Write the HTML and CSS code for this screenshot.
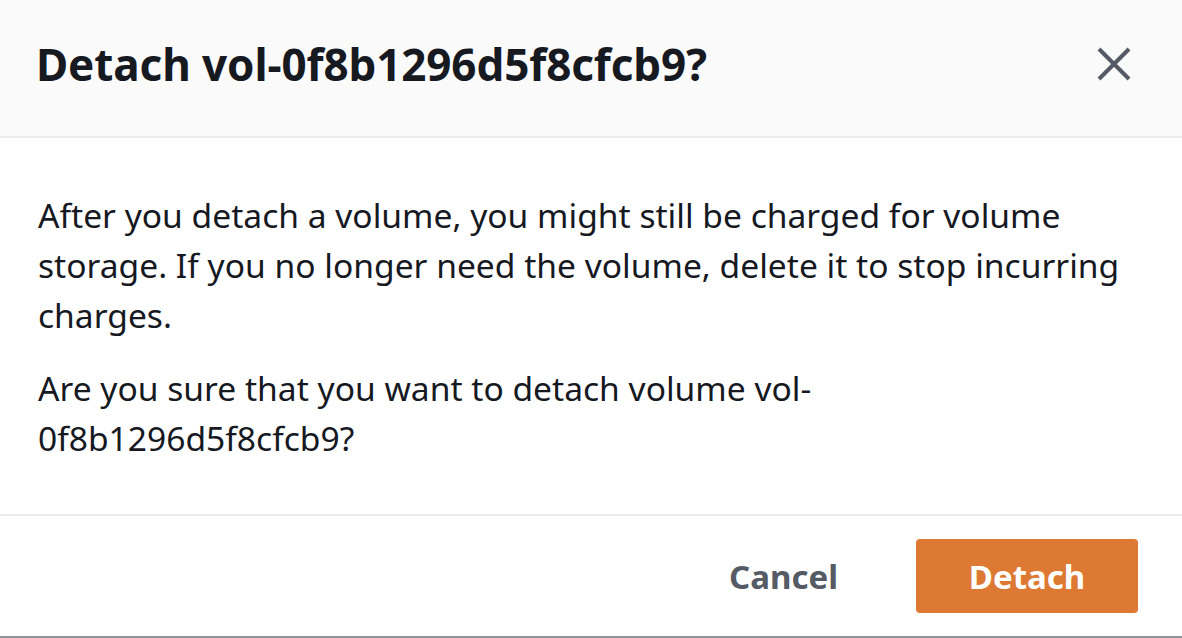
FILE: index.html
```html
<!DOCTYPE html>
<html>
<head>
<meta charset="utf-8">
<link rel="stylesheet" href="styles.css">
</head>
<body>
<div class="modal">
  <div class="modal-header">
    <h2 class="modal-title">Detach vol-0f8b1296d5f8cfcb9?</h2>
    <button class="close-btn" aria-label="Close">
      <svg width="34" height="34" viewBox="0 0 34 34"><path d="M2 2 L32 32 M32 2 L2 32" stroke="#545b64" stroke-width="4" fill="none"/></svg>
    </button>
  </div>
  <div class="modal-body">
    <p class="para">After you detach a volume, you might still be charged for volume storage. If you no longer need the volume, delete it to stop incurring charges.</p>
    <p class="para">Are you sure that you want to detach volume vol-0f8b1296d5f8cfcb9?</p>
  </div>
  <div class="modal-footer">
    <button class="btn-link">Cancel</button>
    <button class="btn-primary">Detach</button>
  </div>
</div>
</body>
</html>
```
FILE: styles.css
```css
html, body {
  margin: 0;
  padding: 0;
  background: #ffffff;
}
body {
  font-family: "Noto Sans", "Open Sans", sans-serif;
  color: #16191f;
  width: 1182px;
  height: 638px;
  overflow: hidden;
}
.modal {
  display: flex;
  flex-direction: column;
  height: 638px;
  box-sizing: border-box;
  border-bottom: 2px solid #8d9599;
}
.modal-header {
  height: 138px;
  box-sizing: border-box;
  background: #fafafa;
  border-bottom: 2px solid #eaeded;
  display: flex;
  align-items: center;
  justify-content: space-between;
  padding: 0 51px 8px 36px;
}
.modal-title {
  margin: 0;
  font-size: 44px;
  font-weight: 700;
  line-height: 56px;
  color: #16191f;
  letter-spacing: -0.1px;
}
.close-btn {
  border: 0;
  background: transparent;
  padding: 0;
  width: 34px;
  height: 34px;
  display: flex;
}
.modal-body {
  padding: 52px 44px 0 38px;
  height: 378px;
  box-sizing: border-box;
  border-bottom: 2px solid #eaeded;
}
.para {
  margin: 0 0 23px 0;
  font-size: 33.6px;
  line-height: 50px;
  color: #16191f;
  max-width: 1088px;
}
.modal-footer {
  flex: 1;
  display: flex;
  align-items: center;
  justify-content: flex-end;
  padding: 0 44px 0 0;
  gap: 78px;
}
.btn-link {
  border: 0;
  background: transparent;
  font-family: inherit;
  font-size: 33px;
  font-weight: 700;
  color: #545b64;
  padding: 0;
}
.btn-primary {
  border: 0;
  background: #dd7933;
  color: #ffffff;
  font-family: inherit;
  font-size: 33px;
  font-weight: 700;
  width: 222px;
  height: 74px;
  border-radius: 4px;
  padding: 0;
}
```
